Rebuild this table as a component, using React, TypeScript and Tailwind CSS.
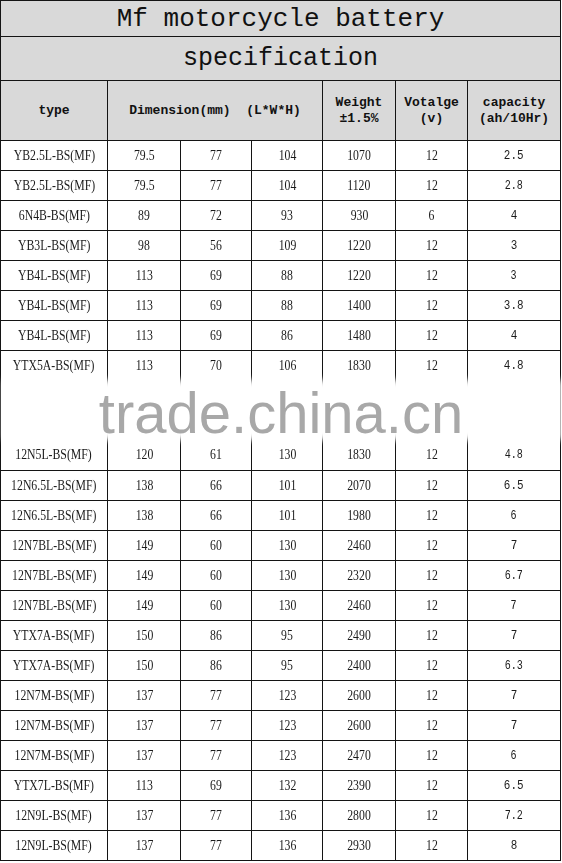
import React from "react";

// type, L, W, H, weight, voltage, capacity, big text
type Row = [string, string, string, string, string, string, string, boolean];

const rows: Row[] = [
  ["YB2.5L-BS(MF)", "79.5", "77", "104", "1070", "12", "2.5", true],
  ["YB2.5L-BS(MF)", "79.5", "77", "104", "1120", "12", "2.8", false],
  ["6N4B-BS(MF)", "89", "72", "93", "930", "6", "4", true],
  ["YB3L-BS(MF)", "98", "56", "109", "1220", "12", "3", true],
  ["YB4L-BS(MF)", "113", "69", "88", "1220", "12", "3", false],
  ["YB4L-BS(MF)", "113", "69", "88", "1400", "12", "3.8", true],
  ["YB4L-BS(MF)", "113", "69", "86", "1480", "12", "4", true],
  ["YTX5A-BS(MF)", "113", "70", "106", "1830", "12", "4.8", true],
  ["12N5L-BS(MF)", "120", "61", "130", "1830", "12", "4.8", false],
  ["12N6.5L-BS(MF)", "138", "66", "101", "2070", "12", "6.5", true],
  ["12N6.5L-BS(MF)", "138", "66", "101", "1980", "12", "6", false],
  ["12N7BL-BS(MF)", "149", "60", "130", "2460", "12", "7", true],
  ["12N7BL-BS(MF)", "149", "60", "130", "2320", "12", "6.7", false],
  ["12N7BL-BS(MF)", "149", "60", "130", "2460", "12", "7", false],
  ["YTX7A-BS(MF)", "150", "86", "95", "2490", "12", "7", true],
  ["YTX7A-BS(MF)", "150", "86", "95", "2400", "12", "6.3", false],
  ["12N7M-BS(MF)", "137", "77", "123", "2600", "12", "7", true],
  ["12N7M-BS(MF)", "137", "77", "123", "2600", "12", "7", true],
  ["12N7M-BS(MF)", "137", "77", "123", "2470", "12", "6", false],
  ["YTX7L-BS(MF)", "113", "69", "132", "2390", "12", "6.5", true],
  ["12N9L-BS(MF)", "137", "77", "136", "2800", "12", "7.2", false],
  ["12N9L-BS(MF)", "137", "77", "136", "2930", "12", "8", true],
];

const line = "border border-[#141414]";
const head = `${line} bg-[#d9d9d9] text-center font-['Liberation_Mono',monospace] font-bold text-[13px] leading-[16px] text-[#111]`;

function Cell({ text, big, mono, tall, after }: { text: string; big: boolean; mono?: boolean; tall?: boolean; after?: boolean }) {
  const size = mono
    ? big
      ? "font-['Liberation_Mono',monospace] text-[13px]"
      : "font-['Liberation_Mono',monospace] text-[12px]"
    : "font-['Liberation_Serif',serif] text-[14px]";
  return (
    <td
      className={`${line} p-0 text-center align-top text-[#1a1a1a] ${tall ? "h-[90px] border-b-0" : "h-[30px]"} ${after ? "border-t-0" : ""}`}
    >
      <div className="flex h-[29px] items-center justify-center">
        <span className={`inline-block scale-x-[0.84] leading-none ${size}`}>{text}</span>
      </div>
    </td>
  );
}

export default function App() {
  return (
    <div className="relative h-[863px] w-[562px] overflow-hidden bg-white">
      <table className="w-[560px] table-fixed border-collapse">
        <colgroup>
          <col className="w-[107px]" />
          <col className="w-[73px]" />
          <col className="w-[71px]" />
          <col className="w-[71px]" />
          <col className="w-[73px]" />
          <col className="w-[72px]" />
          <col className="w-[93px]" />
        </colgroup>
        <tbody>
          <tr>
            <td colSpan={7} className={`${line} h-[36px] bg-[#d9d9d9] p-0 text-center font-['Liberation_Mono',monospace] text-[26px] leading-none text-[#111]`}>
              Mf motorcycle battery
            </td>
          </tr>
          <tr>
            <td colSpan={7} className={`${line} h-[44px] bg-[#d9d9d9] p-0 text-center font-['Liberation_Mono',monospace] text-[25px] leading-none text-[#111]`}>
              specification
            </td>
          </tr>
          <tr>
            <td className={`${head} h-[60px] p-0`}>type</td>
            <td colSpan={3} className={`${head} p-0 whitespace-pre`}>Dimension(mm)  (L*W*H)</td>
            <td className={`${head} p-0`}>
              Weight
              <br />
              ±1.5%
            </td>
            <td className={`${head} p-0`}>
              Votalge
              <br />
              (v)
            </td>
            <td className={`${head} p-0`}>
              capacity
              <br />
              (ah/10Hr)
            </td>
          </tr>
          {rows.map((r, i) => {
            const tall = r[0] === "YTX5A-BS(MF)";
            const after = r[0] === "12N5L-BS(MF)";
            return (
              <tr key={i}>
                {r.slice(0, 7).map((c, j) => (
                  <Cell key={j} text={c as string} big={r[7]} mono={j === 6} tall={tall} after={after} />
                ))}
              </tr>
            );
          })}
        </tbody>
      </table>

      {/* watermark band */}
      <div className="absolute left-[3px] right-0 top-[380px] h-[60px] bg-white blur-[3px]" />
      <div className="absolute left-0 right-0 top-[384px] text-center font-['Liberation_Sans',sans-serif] text-[58px] leading-[58px] text-[#a8a8a8]">
        trade.china.cn
      </div>
    </div>
  );
}
